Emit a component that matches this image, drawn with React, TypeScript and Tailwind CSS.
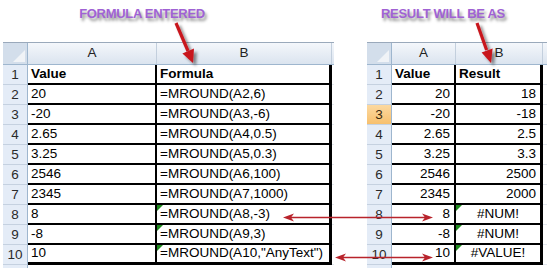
import React from "react"

type Row = {
  n: number
  a: string
  b: string
  flag?: boolean
  head?: boolean
}

const LEFT: Row[] = [
  { n: 1, a: "Value", b: "Formula", head: true },
  { n: 2, a: "20", b: "=MROUND(A2,6)" },
  { n: 3, a: "-20", b: "=MROUND(A3,-6)" },
  { n: 4, a: "2.65", b: "=MROUND(A4,0.5)" },
  { n: 5, a: "3.25", b: "=MROUND(A5,0.3)" },
  { n: 6, a: "2546", b: "=MROUND(A6,100)" },
  { n: 7, a: "2345", b: "=MROUND(A7,1000)" },
  { n: 8, a: "8", b: "=MROUND(A8,-3)", flag: true },
  { n: 9, a: "-8", b: "=MROUND(A9,3)", flag: true },
  { n: 10, a: "10", b: '=MROUND(A10,"AnyText")', flag: true },
]

const RIGHT: Row[] = [
  { n: 1, a: "Value", b: "Result", head: true },
  { n: 2, a: "20", b: "18" },
  { n: 3, a: "-20", b: "-18" },
  { n: 4, a: "2.65", b: "2.5" },
  { n: 5, a: "3.25", b: "3.3" },
  { n: 6, a: "2546", b: "2500" },
  { n: 7, a: "2345", b: "2000" },
  { n: 8, a: "8", b: "#NUM!", flag: true },
  { n: 9, a: "-8", b: "#NUM!", flag: true },
  { n: 10, a: "10", b: "#VALUE!", flag: true },
]

const font = { fontFamily: '"Liberation Sans", Arial, sans-serif' }

function Flag() {
  return (
    <span className="absolute left-0 top-0 w-0 h-0 border-t-[6px] border-r-[6px] border-t-[#1e8a1e] border-r-transparent" />
  )
}

function ColHeader({ widths, extra }: { widths: [number, number, number]; extra: number }) {
  return (
    <div className="flex h-[23px] border-t border-[#9aa9bb] bg-gradient-to-b from-[#f4f7fb] to-[#dbe4ef] border-b border-b-[#9eb6ce] text-[13.5px] text-[#222]">
      <div
        className="relative h-full bg-[#d3deeb] border-r border-[#9eb6ce]"
        style={{ width: widths[0] }}
      >
        <span className="absolute right-[2px] bottom-[2px] w-0 h-0 border-l-[12px] border-b-[12px] border-l-transparent border-b-[#f0f3f7]" />
      </div>
      <div className="h-full flex items-center justify-center border-r border-[#c3cfdd]" style={{ width: widths[1] }}>
        A
      </div>
      <div className="h-full flex items-center justify-center border-r border-[#c3cfdd]" style={{ width: widths[2] }}>
        B
      </div>
      <div className="h-full" style={{ width: extra }} />
    </div>
  )
}

function Sheet({
  rows,
  widths,
  extra,
  numeric,
}: {
  rows: Row[]
  widths: [number, number, number]
  extra: number
  numeric?: boolean
}) {
  return (
    <div className="flex flex-col" style={font}>
      <ColHeader widths={widths} extra={extra} />
      {rows.map((r) => {
        const last = r.n === 10
        const hl = numeric && r.n === 3
        const alignA = r.head || !numeric ? "justify-start pl-[3px]" : "justify-end pr-[4px]"
        const isErr = r.b.startsWith("#")
        const alignB = r.head || !numeric ? "justify-start pl-[3px]" : isErr ? "justify-center" : "justify-end pr-[4px]"
        return (
          <div key={r.n} className="flex h-[20px] text-[13.5px] leading-none">
            <div
              className={`flex items-end justify-center pb-[3px] border-r border-[#9eb6ce] border-b border-b-[#c5d1e0] ${
                hl ? "bg-gradient-to-b from-[#fcd9a0] to-[#f7c06d] text-[#3a2a10]" : "bg-[#e4ecf7] text-[#2a2a2a]"
              }`}
              style={{ width: widths[0] }}
            >
              {r.n}
            </div>
            <div
              className={`relative flex items-end pb-[3px] bg-white text-black border-r-2 border-r-black ${
                last ? "border-b-[3px] border-b-black" : "border-b-2 border-b-black"
              } ${alignA} ${r.head ? "font-bold" : ""}`}
              style={{ width: widths[1] }}
            >
              {r.a}
            </div>
            <div
              className={`relative flex items-end pb-[3px] bg-white text-black border-r-[3px] border-r-black ${
                last ? "border-b-[3px] border-b-black" : "border-b-2 border-b-black"
              } ${alignB} ${r.head ? "font-bold" : ""}`}
              style={{ width: widths[2] }}
            >
              {r.flag && <Flag />}
              {r.b}
            </div>
            <div className="bg-white border-b border-b-[#e3e8ef]" style={{ width: extra }} />
          </div>
        )
      })}
      <div className="flex h-[3px]">
        <div className="bg-[#e4ecf7] border-r border-[#9eb6ce]" style={{ width: widths[0] }} />
      </div>
    </div>
  )
}

function Arrows() {
  return (
    <svg className="absolute left-0 top-0 pointer-events-none" width={547} height={270} viewBox="0 0 547 270">
      <defs>
        <filter id="sh" x="-50%" y="-50%" width="200%" height="200%">
          <feDropShadow dx="3" dy="3" stdDeviation="1.8" floodColor="#000" floodOpacity="0.45" />
        </filter>
      </defs>
      <g filter="url(#sh)" fill="#c8141c" stroke="#c8141c">
        <line x1="176" y1="23" x2="188" y2="51" strokeWidth="3.2" />
        <polygon points="193,63 194,48.6 182.4,53.6" stroke="none" />
        <line x1="477" y1="23" x2="486.6" y2="50" strokeWidth="3.2" />
        <polygon points="491,63 492.6,48.4 481.6,52.4" stroke="none" />
      </g>
      <g fill="#b8232b" stroke="#b8232b">
        <line x1="290" y1="217.5" x2="426" y2="217.5" strokeWidth="1.3" />
        <polygon points="283,217.5 294,213.5 291,217.5 294,221.5" stroke="none" />
        <polygon points="433,217.5 422,213.5 425,217.5 422,221.5" stroke="none" />
        <line x1="342" y1="257.5" x2="426" y2="257.5" strokeWidth="1.3" />
        <polygon points="335,257.5 346,253.5 343,257.5 346,261.5" stroke="none" />
        <polygon points="433,257.5 422,253.5 425,257.5 422,261.5" stroke="none" />
      </g>
    </svg>
  )
}

export default function App() {
  return (
    <div className="relative w-[547px] h-[270px] bg-white overflow-hidden">
      <div
        className="flex h-[42px] pt-[4px] pl-[62px] text-[13px] tracking-[-0.3px] font-bold uppercase text-[#a062d4] [text-shadow:2px_3px_3px_rgba(0,0,0,0.45)]"
        style={font}
      >
        <span className="w-[160px] text-center">Formula Entered</span>
        <span className="w-[160px] ml-[141px] text-center">Result will be as</span>
      </div>
      <div className="flex pl-[3px]">
        <Sheet rows={LEFT} widths={[25, 129, 175]} extra={2} />
        <div className="w-[33px]" />
        <Sheet rows={RIGHT} widths={[25, 64, 87]} extra={4} numeric />
      </div>
      <Arrows />
    </div>
  )
}
